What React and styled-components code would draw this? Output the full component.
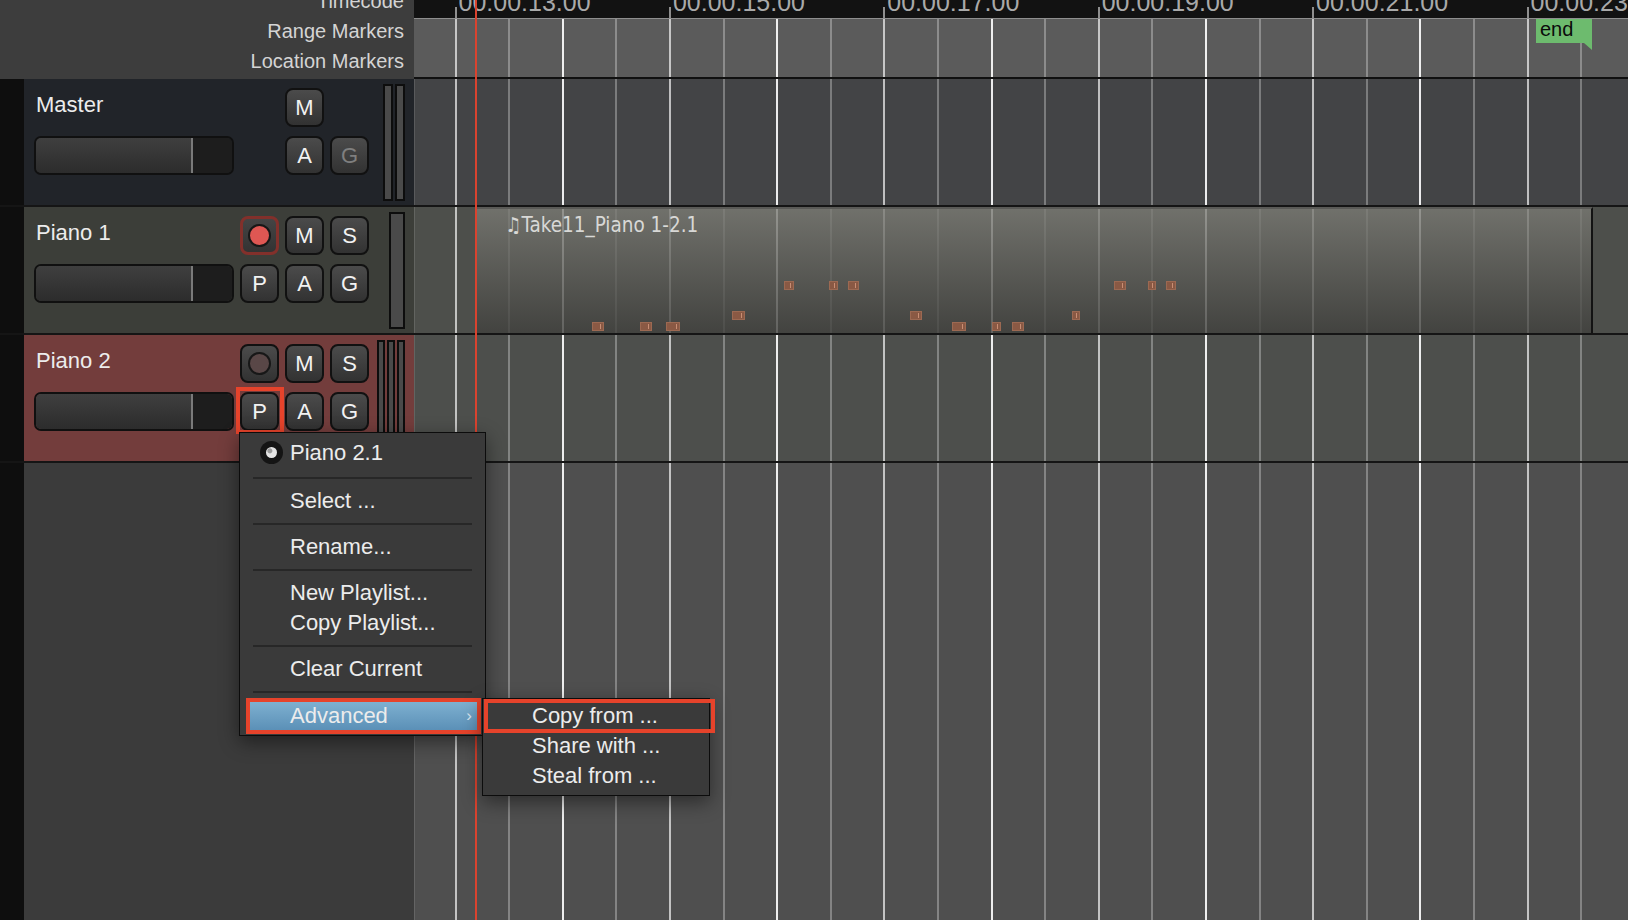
import React from 'react';
import styled, { createGlobalStyle, css } from 'styled-components';

const UI_FONT = `"Liberation Sans", Arial, Helvetica, sans-serif`;

const GlobalStyle = createGlobalStyle`
  html, body { margin: 0; padding: 0; background: #3b3b3b; }
  body { font-family: ${UI_FONT}; overflow: hidden; }
  *, *::before, *::after { box-sizing: border-box; }
`;

/* timeline geometry (canvas-relative) */
const ORIGIN_X = 41.5;
const SUB = 53.6;
const LINE_KS = Array.from({ length: 22 }, (_, k) => k);
const TIMECODES = ['00:00:13.00', '00:00:15.00', '00:00:17.00', '00:00:19.00', '00:00:21.00', '00:00:23.00'];

const lineLevel = (k) => (k % 2 ? 'minor' : k % 4 === 0 ? 'bar' : 'beat');

const Page = styled.div`
  position: relative;
  width: 1628px;
  height: 920px;
  overflow: hidden;
  display: flex;
  flex-direction: column;
  background: #3b3b3b;
  font-family: ${UI_FONT};
`;

const TopBar = styled.div`
  display: flex;
  flex: none;
  height: 79px;
`;

const RulerNames = styled.div`
  width: 414px;
  flex: none;
  background: #3d3d3d;
  padding-right: 10px;
  overflow: hidden;
  display: flex;
  flex-direction: column;
  align-items: flex-end;
`;

const RulerNameStack = styled.div`
  margin-top: -14px;
  display: flex;
  flex-direction: column;
  align-items: flex-end;
`;

const RulerName = styled.div`
  font-size: 20px;
  line-height: 30px;
  color: #d4d4d4;
  white-space: nowrap;
`;

const Rulers = styled.div`
  flex: 1;
  min-width: 0;
  display: flex;
  flex-direction: column;
`;

const TimecodeBar = styled.div`
  position: relative;
  flex: none;
  height: 19px;
  background: #121212;
  border-bottom: 1px solid #8e8e8e;
  overflow: hidden;
`;

const Timecode = styled.span`
  position: absolute;
  top: -10px;
  font-size: 25px;
  line-height: 25px;
  color: #a9a9a9;
  white-space: nowrap;
`;

const Tick = styled.span`
  position: absolute;
  top: 7px;
  bottom: 0;
  width: 2px;
  background: #8e8e8e;
`;

const MarkerBar = styled.div`
  position: relative;
  flex: 1;
  background: #5b5b5b;
  border-bottom: 2px solid #101010;
  overflow: hidden;
`;

const EndFlag = styled.div`
  position: absolute;
  left: 1122px;
  top: 0;
  width: 56px;
  height: 24px;
  background: #6dbb6e;
  color: #0b0b0b;
  font-size: 20px;
  line-height: 20px;
  padding-left: 4px;
  z-index: 2;
  &::after {
    content: '';
    position: absolute;
    right: 0;
    top: 100%;
    width: 0;
    height: 0;
    border-top: 7px solid #6dbb6e;
    border-left: 8px solid transparent;
  }
`;

const GridLine = styled.div`
  position: absolute;
  top: 0;
  bottom: 0;
  width: 2px;
  background: ${(p) =>
    p.$level === 'minor'
      ? 'rgba(255,255,255,0.3)'
      : p.$level === 'bar'
      ? 'rgba(255,255,255,0.66)'
      : 'rgba(255,255,255,0.9)'};
`;

const GridLines = () => (
  <>
    {LINE_KS.map((k) => (
      <GridLine key={k} $level={lineLevel(k)} style={{ left: ORIGIN_X + k * SUB - 1 }} />
    ))}
  </>
);

/* track rows */
const headTones = { master: '#212429', piano1: '#3c3e39', piano2: '#733d3c' };
const laneTones = { master: '#434446', piano1: '#4d4f4b', piano2: '#4d4f4c', empty: '#4f4f4f' };

const TrackRow = styled.div`
  display: flex;
  flex: none;
  height: 128px;
  border-bottom: 2px solid #151515;
`;

const Strip = styled.div`
  width: 24px;
  flex: none;
  background: #0e0e0e;
`;

const TrackHead = styled.div`
  width: 390px;
  flex: none;
  background: ${(p) => headTones[p.$tone]};
  display: flex;
  align-items: flex-start;
  padding: 9px 9px 0 10px;
`;

const Controls = styled.div`
  display: grid;
  grid-template-columns: 200px repeat(3, 39px);
  grid-template-rows: 39px 39px;
  column-gap: 6px;
  row-gap: 9px;
`;

const TrackName = styled.div`
  grid-column: 1;
  grid-row: 1;
  align-self: start;
  margin-top: 5px;
  padding-left: 2px;
  font-size: 22px;
  line-height: 24px;
  color: #ececec;
  white-space: nowrap;
`;

const Fader = styled.div`
  grid-column: 1;
  grid-row: 2;
  display: flex;
  border: 2px solid #101010;
  border-radius: 7px;
  overflow: hidden;
`;

const FaderBody = styled.div`
  flex: 1;
  background: linear-gradient(#3f3f3f, #2c2c2c);
  border-right: 2px solid #7a7a7a;
`;

const FaderRest = styled.div`
  width: 39px;
  background: #1d1d1d;
`;

const Btn = styled.div`
  position: relative;
  grid-column: ${(p) => p.$col};
  grid-row: ${(p) => p.$row};
  display: flex;
  align-items: center;
  justify-content: center;
  border: 2px solid #111;
  border-radius: 8px;
  background: linear-gradient(#4b4b4b, #323232);
  color: ${(p) => (p.$dim ? '#7f7f7f' : '#f2f2f2')};
  font-size: 22px;
  line-height: 1;
  ${(p) =>
    p.$armed &&
    css`
      border: 3px solid #82302b;
      background: linear-gradient(#444, #333);
    `}
  ${(p) =>
    p.$marked &&
    css`
      &::after {
        content: '';
        position: absolute;
        top: -7px;
        right: -7px;
        bottom: -5px;
        left: -6px;
        border: 4px solid #e6432b;
      }
    `}
`;

const RecDot = styled.span`
  width: 23px;
  height: 23px;
  border-radius: 50%;
  background: ${(p) => (p.$armed ? '#de5753' : '#594747')};
  border: 2px solid #171717;
`;

const Meters = styled.div`
  margin-left: auto;
  margin-top: -4px;
  height: 117px;
  display: flex;
  gap: 2px;
`;

const MeterBar = styled.div`
  width: ${(p) => p.$w}px;
  border: 2px solid #0d0d0d;
  background: #4a4a4a;
`;

const Lane = styled.div`
  position: relative;
  flex: 1;
  overflow: hidden;
  background: ${(p) => laneTones[p.$tone]};
  box-shadow: inset 1px 0 0 rgba(255, 255, 255, 0.12);
`;

const Region = styled.div`
  position: absolute;
  left: 62px;
  top: 0;
  bottom: 0;
  width: 1117px;
  z-index: 1;
  border-top: 2px solid #5a5a57;
  border-right: 2px solid #131313;
  background: linear-gradient(rgba(122, 122, 116, 0.78), rgba(64, 64, 61, 0.8));
  padding: 4px 0 0 29px;
`;

const RegionTitle = styled.div`
  font-family: "DejaVu Sans Condensed", "DejaVu Sans", sans-serif;
  font-stretch: condensed;
  font-size: 20.5px;
  line-height: 24px;
  color: #d8d8d6;
  white-space: nowrap;
`;

const Note = styled.div`
  position: absolute;
  height: 9px;
  background: #8a5944;
  border: 1px solid #9c6952;
  &::after {
    content: '';
    position: absolute;
    right: 2px;
    top: 1px;
    bottom: 1px;
    width: 1px;
    background: #c88e74;
  }
`;

const NOTES = [
  [789, 10, 285.5], [833, 9, 285.5], [853.5, 10.5, 285.5], [1119.5, 12, 285.5], [1151.5, 8, 285.5], [1171, 10, 285.5],
  [738.5, 13, 315.6], [915.7, 12, 315.6], [1075.6, 8, 315.6],
  [597.5, 12, 326], [646, 12, 326], [673, 13.5, 326], [959, 13.5, 326], [996.6, 9.5, 326], [1017.6, 12, 326],
];

const FillerRow = styled.div`
  flex: 1;
  display: flex;
`;

const FillerHead = styled.div`
  width: 390px;
  flex: none;
  background: #3b3b3b;
`;

const Playhead = styled.div`
  position: absolute;
  left: 475px;
  top: 0;
  bottom: 0;
  width: 2px;
  background: #da432f;
  z-index: 5;
`;

/* menus */
const Menu = styled.div`
  position: absolute;
  left: 239px;
  top: 432px;
  width: 247px;
  z-index: 10;
  background: #3a3a3a;
  border: 1px solid #0c0c0c;
  padding: 2px 0 5px;
  box-shadow: 0 6px 18px rgba(0, 0, 0, 0.45);
`;

const MenuItem = styled.div`
  position: relative;
  display: flex;
  align-items: center;
  height: ${(p) => (p.$tall ? 35 : 30)}px;
  font-size: 22px;
  color: #ececec;
  white-space: nowrap;
  ${(p) =>
    p.$active &&
    css`
      height: 28px;
      margin: 2px 8px 0 10px;
      background: linear-gradient(#7eb0d0, #5b90b7);
      outline: 4px solid #e6432b;
    `}
`;

const ItemLead = styled.span`
  width: ${(p) => (p.$active ? 40 : 50)}px;
  flex: none;
  display: flex;
  align-items: center;
  padding-left: 20px;
`;

const Radio = styled.span`
  width: 23px;
  height: 23px;
  border-radius: 50%;
  background: #141414;
  display: flex;
  align-items: center;
  justify-content: center;
  &::after {
    content: '';
    width: 11px;
    height: 11px;
    border-radius: 50%;
    background: radial-gradient(circle at 35% 35%, #9a9a9a 0 2px, #e4e4e4 3px);
  }
`;

const Chevron = styled.span`
  margin-left: auto;
  padding-right: 5px;
  font-size: 17px;
  color: #d6e4ee;
`;

const MenuSep = styled.div`
  height: 16px;
  display: flex;
  align-items: center;
  padding: 0 13px;
  &::before {
    content: '';
    flex: 1;
    height: 2px;
    background: #272727;
  }
`;

const SubMenu = styled.div`
  position: absolute;
  left: 482px;
  top: 698px;
  width: 228px;
  z-index: 11;
  background: #3a3a3a;
  border: 1px solid #0c0c0c;
  padding: 2px 0 4px;
  box-shadow: 0 6px 18px rgba(0, 0, 0, 0.45);
`;

const SubItem = styled.div`
  position: relative;
  height: 30px;
  display: flex;
  align-items: center;
  padding-left: 49px;
  font-size: 22px;
  color: #ececec;
  white-space: nowrap;
  ${(p) =>
    p.$marked &&
    css`
      &::after {
        content: '';
        position: absolute;
        left: 1px;
        right: -6px;
        top: -2px;
        bottom: -2px;
        border: 4px solid #e6432b;
      }
    `}
`;

const Track = ({ tone, name, rec, buttons, meters, marked, children }) => (
  <TrackRow>
    <Strip />
    <TrackHead $tone={tone}>
      <Controls>
        <TrackName>{name}</TrackName>
        {rec && (
          <Btn $col={2} $row={1} $armed={rec === 'armed'}>
            <RecDot $armed={rec === 'armed'} />
          </Btn>
        )}
        {buttons.map(([label, col, row, dim]) => (
          <Btn key={label} $col={col} $row={row} $dim={dim} $marked={marked === label}>
            {label}
          </Btn>
        ))}
        <Fader>
          <FaderBody />
          <FaderRest />
        </Fader>
      </Controls>
      <Meters>
        {meters.map((w, i) => (
          <MeterBar key={i} $w={w} />
        ))}
      </Meters>
    </TrackHead>
    <Lane $tone={tone}>
      <GridLines />
      {children}
    </Lane>
  </TrackRow>
);

export default function App() {
  return (
    <>
      <GlobalStyle />
      <Page>
        <TopBar>
          <RulerNames>
            <RulerNameStack>
              <RulerName>Timecode</RulerName>
              <RulerName>Range Markers</RulerName>
              <RulerName>Location Markers</RulerName>
            </RulerNameStack>
          </RulerNames>
          <Rulers>
            <TimecodeBar>
              {TIMECODES.map((t, j) => (
                <React.Fragment key={t}>
                  <Tick style={{ left: ORIGIN_X + j * 4 * SUB - 1 }} />
                  <Timecode style={{ left: ORIGIN_X + j * 4 * SUB + 3 }}>{t}</Timecode>
                </React.Fragment>
              ))}
            </TimecodeBar>
            <MarkerBar>
              <GridLines />
              <EndFlag>end</EndFlag>
            </MarkerBar>
          </Rulers>
        </TopBar>

        <Track
          tone="master"
          name="Master"
          buttons={[['M', 3, 1], ['A', 3, 2], ['G', 4, 2, true]]}
          meters={[10, 10]}
        />
        <Track
          tone="piano1"
          name="Piano 1"
          rec="armed"
          buttons={[['M', 3, 1], ['S', 4, 1], ['P', 2, 2], ['A', 3, 2], ['G', 4, 2]]}
          meters={[16]}
        >
          <Region>
            <RegionTitle>♫Take11_Piano 1-2.1</RegionTitle>
            {NOTES.map(([xc, w, yc], i) => (
              <Note key={i} style={{ left: xc - w / 2 - 476, width: w, top: yc - 4.5 - 209 }} />
            ))}
          </Region>
        </Track>
        <Track
          tone="piano2"
          name="Piano 2"
          rec="idle"
          marked="P"
          buttons={[['M', 3, 1], ['S', 4, 1], ['P', 2, 2], ['A', 3, 2], ['G', 4, 2]]}
          meters={[8, 8, 8]}
        />

        <FillerRow>
          <Strip />
          <FillerHead />
          <Lane $tone="empty">
            <GridLines />
          </Lane>
        </FillerRow>

        <Playhead />

        <Menu>
          <MenuItem $tall>
            <ItemLead>
              <Radio />
            </ItemLead>
            Piano 2.1
          </MenuItem>
          <MenuSep />
          <MenuItem>
            <ItemLead />
            Select ...
          </MenuItem>
          <MenuSep />
          <MenuItem>
            <ItemLead />
            Rename...
          </MenuItem>
          <MenuSep />
          <MenuItem>
            <ItemLead />
            New Playlist...
          </MenuItem>
          <MenuItem>
            <ItemLead />
            Copy Playlist...
          </MenuItem>
          <MenuSep />
          <MenuItem>
            <ItemLead />
            Clear Current
          </MenuItem>
          <MenuSep />
          <MenuItem $active>
            <ItemLead $active />
            Advanced
            <Chevron>›</Chevron>
          </MenuItem>
        </Menu>

        <SubMenu>
          <SubItem $marked>Copy from ...</SubItem>
          <SubItem>Share with ...</SubItem>
          <SubItem>Steal from ...</SubItem>
        </SubMenu>
      </Page>
    </>
  );
}
